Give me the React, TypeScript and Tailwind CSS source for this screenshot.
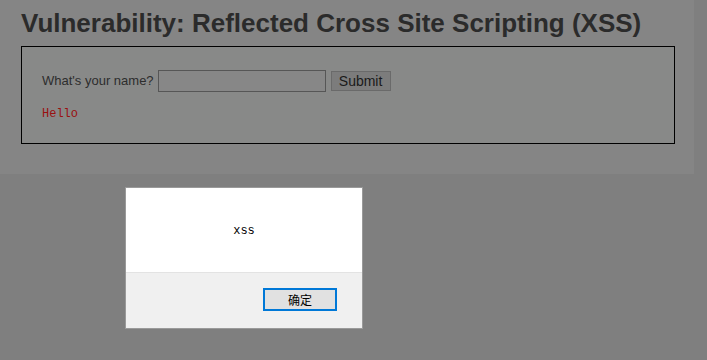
const App = () => {
  return (
    <div className="h-[360px] w-[707px] overflow-hidden bg-[#7f7f7f] font-['Liberation_Sans',Arial,sans-serif]">
      {/* page body, dimmed by the alert */}
      <div className="h-[174px] w-[694px] bg-[#858585] pl-[21px] pt-[7px]">
        <h1 className="text-[26px] font-bold leading-[32px] text-[#2b2b2b]">
          Vulnerability: Reflected Cross Site Scripting (XSS)
        </h1>
        <div className="mt-[7px] h-[98px] w-[654px] border border-black bg-[#888988] pl-[20px] pt-[23px]">
          <form className="flex items-center text-[13px] text-[#2d2d2d]">
            <span>What's your name?</span>
            <input
              type="text"
              className="ml-[4px] h-[22px] w-[168px] border border-[#565656] bg-[#878787] outline-none"
            />
            <button
              type="button"
              className="ml-[5px] h-[20px] w-[60px] border border-[#6a6a6a] bg-[#7c7c7c] text-[14px] leading-[18px] text-[#1a1a1a]"
            >
              Submit
            </button>
          </form>
          <pre className="mt-[14px] font-['Liberation_Mono','Courier_New',monospace] text-[12px] leading-[16px] text-[#9a1010]">
            Hello
          </pre>
        </div>
      </div>

      {/* alert dialog */}
      <div className="ml-[125px] mt-[13px] w-[238px] border border-[#9a9a9a] bg-white">
        <div className="flex h-[84px] items-center justify-center pt-[2px] font-['Liberation_Mono',monospace] text-[12px] text-black">
          xss
        </div>
        <div className="flex h-[56px] justify-end border-t border-[#e3e3e3] bg-[#f0f0f0] pr-[25px] pt-[15px]">
          <button
            type="button"
            className="h-[23px] w-[74px] border-2 border-[#0078d7] bg-[#e1e1e1] font-['Noto_Sans_CJK_SC',sans-serif] text-[12px] leading-[18px] text-black"
          >
            确定
          </button>
        </div>
      </div>
    </div>
  );
};

export default App;
